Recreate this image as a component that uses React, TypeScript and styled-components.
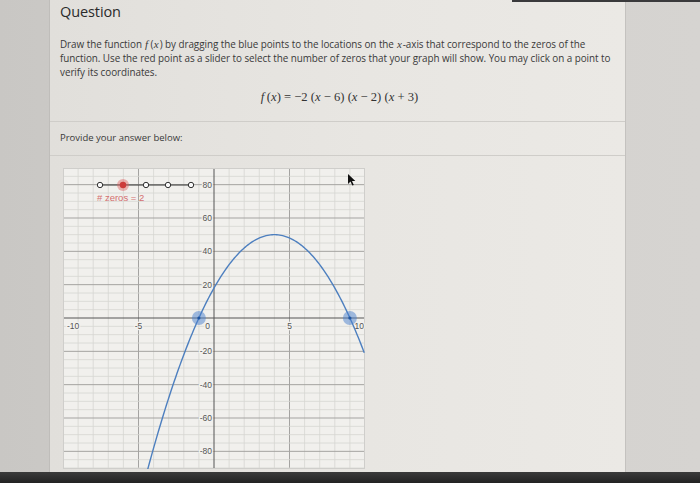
import React from 'react';
import styled, { createGlobalStyle } from 'styled-components';

const GlobalStyle = createGlobalStyle`
  html, body {
    margin: 0;
    padding: 0;
    height: 483px;
    overflow: hidden;
    background: #cfcdca;
  }
  #root {
    height: 483px;
  }
`;

const Screen = styled.div`
  position: relative;
  height: 483px;
  display: flex;
  flex-direction: column;
  background: linear-gradient(90deg, #c9c7c4 0%, #d3d1ce 60%, #d6d4d1 100%);
`;

const Bezel = styled.div`
  position: absolute;
  top: 0;
  left: 512px;
  right: 0;
  height: 2px;
  background: #3a3a3c;
`;

const Main = styled.div`
  flex: 1;
  display: flex;
  overflow: hidden;
`;

const Gutter = styled.div<{ $w?: number }>`
  width: ${p => (p.$w ? `${p.$w}px` : 'auto')};
  flex: ${p => (p.$w ? '0 0 auto' : '1')};
`;

const Card = styled.div`
  width: 575px;
  background: linear-gradient(90deg, #e1dfdb 0%, #e8e6e2 55%, #ebe9e5 100%);
  border-left: 1px solid #bfbdba;
  border-right: 1px solid #c4c2bf;
  display: flex;
  flex-direction: column;
  font-family: 'Open Sans', 'Liberation Sans', sans-serif;
  color: #3b3b3b;
`;

const Section = styled.div<{ $pad: string }>`
  padding: ${p => p.$pad};
  border-bottom: 1px solid #cfcdc9;
`;

const Heading = styled.h2`
  margin: 0;
  font-size: 14.5px;
  font-weight: 400;
  line-height: 20px;
  color: #2a2a2a;
  letter-spacing: -0.1px;
`;

const Prompt = styled.p`
  margin: 15px 0 0;
  font-size: 9.9px;
  line-height: 14px;
  letter-spacing: -0.05px;
  color: #3a3a3a;
`;

const MathVar = styled.span<{ $gap?: boolean }>`
  display: inline-block;
  line-height: 12px;
  font-family: 'Liberation Serif', 'DejaVu Serif', serif;
  font-style: italic;
  font-size: 11px;
  padding: 0 ${p => (p.$gap ? '2.5px' : '1px')} 0 0.5px;
`;

const Formula = styled.div`
  margin: 11px 0 0;
  text-align: center;
  padding-left: 4px;
  font-family: 'Liberation Serif', 'DejaVu Serif', serif;
  font-size: 12.6px;
  line-height: 14px;
  color: #333;
`;

const Label = styled.div`
  font-size: 9.5px;
  line-height: 12px;
  color: #3a3a3a;
`;

const GraphArea = styled.div`
  padding: 12px 0 0 13px;
`;

const BottomBar = styled.div`
  height: 11px;
  background: linear-gradient(180deg, #3b3b3b 0%, #222 100%);
`;

const W = 302;
const H = 301;
const OX = 151;
const OY = 150;
const SX = 15.1;
const SY = 150 / 90;
const px = (u: number) => OX + u * SX;
const py = (v: number) => OY - v * SY;
const f = (x: number) => -2 * (x + 1) * (x - 9);

const Graph: React.FC = () => {
  const vLines = [];
  for (let i = -10; i <= 10; i++) {
    if (i === 0) continue;
    vLines.push(
      <line key={`v${i}`} x1={px(i)} x2={px(i)} y1={0} y2={H}
        stroke={i % 5 === 0 ? '#a4a3a1' : '#d6d5d2'} strokeWidth={i % 5 === 0 ? 1 : 0.8} />
    );
  }
  const hLines = [];
  for (let j = -90; j <= 90; j += 5) {
    if (j === 0) continue;
    hLines.push(
      <line key={`h${j}`} x1={0} x2={W} y1={py(j)} y2={py(j)}
        stroke={j % 20 === 0 ? '#a4a3a1' : '#d6d5d2'} strokeWidth={j % 20 === 0 ? 1 : 0.8} />
    );
  }

  const pts: string[] = [];
  for (let x = -4.45; x <= 10.01; x += 0.1) {
    pts.push(`${px(x).toFixed(2)},${py(f(x)).toFixed(2)}`);
  }

  const labelStyle = {
    fontFamily: "'Liberation Sans', Arial, sans-serif",
    fontSize: 8.5,
    fill: '#555',
    stroke: '#f3f2ef',
    strokeWidth: 2.5,
    paintOrder: 'stroke' as const,
  };

  const sliderX = [37, 60, 83, 105, 128];

  return (
    <svg width={W} height={H} viewBox={`0 0 ${W} ${H}`} style={{ display: 'block' }}>
      <rect x={0} y={0} width={W} height={H} fill="#f1f0ed" />
      {vLines}
      {hLines}
      <line x1={0} x2={W} y1={OY} y2={OY} stroke="#555" strokeWidth={1} />
      <line x1={OX} x2={OX} y1={0} y2={H} stroke="#555" strokeWidth={1} />
      <rect x={0.5} y={0.5} width={W - 1} height={H - 1} fill="none" stroke="#cfcecb" />

      {[20, 40, 60, 80, -20, -40, -60, -80].map(v => (
        <text key={`yl${v}`} x={OX - 2} y={py(v) + 3} textAnchor="end" style={labelStyle}>
          {v}
        </text>
      ))}
      <text x={4} y={OY + 11} style={labelStyle}>-10</text>
      <text x={px(-5)} y={OY + 11} textAnchor="middle" style={labelStyle}>-5</text>
      <text x={OX - 4} y={OY + 11} textAnchor="end" style={labelStyle}>0</text>
      <text x={px(5)} y={OY + 11} textAnchor="middle" style={labelStyle}>5</text>
      <text x={W - 1} y={OY + 11} textAnchor="end" style={labelStyle}>10</text>

      <polyline points={pts.join(' ')} fill="none" stroke="#4d7fbf" strokeWidth={1.4} />

      {[-1, 9].map(z => (
        <g key={`z${z}`}>
          <circle cx={px(z)} cy={OY} r={7} fill="rgba(74,128,205,0.5)" />
          <circle cx={px(z)} cy={OY} r={1.6} fill="#1f56a3" />
        </g>
      ))}

      <line x1={sliderX[0]} x2={sliderX[4]} y1={17} y2={17} stroke="#3a3a3a" strokeWidth={1} />
      {sliderX.map((sx, i) =>
        i === 1 ? (
          <g key={`s${i}`}>
            <circle cx={sx} cy={17} r={6} fill="rgba(222,96,96,0.45)" />
            <circle cx={sx} cy={17} r={3.2} fill="#cc3a3a" />
          </g>
        ) : (
          <circle key={`s${i}`} cx={sx} cy={17} r={2.7} fill="#fafafa" stroke="#333" strokeWidth={1} />
        )
      )}
      <text x={34} y={33} style={{ fontFamily: "'Liberation Sans', Arial, sans-serif", fontSize: 9.5, fill: '#d46f6f' }}>
        # zeros = 2
      </text>

      <path d="M285 6 L285 16 L287.5 13.6 L289.3 17.6 L290.8 16.9 L289 13 L292.3 13 Z" fill="#111" />
    </svg>
  );
};

export default function App() {
  return (
    <>
      <GlobalStyle />
      <Screen>
        <Bezel />
        <Main>
          <Gutter $w={49} />
          <Card>
            <Section $pad="2px 10px 17px">
              <Heading>Question</Heading>
              <Prompt>
                Draw the function <MathVar $gap>f</MathVar>(<MathVar>x</MathVar>) by dragging the blue points to the
                locations on the <MathVar>x</MathVar>-axis that correspond to the zeros of the function. Use the red
                point as a slider to select the number of zeros that your graph will show. You may click on a point
                to verify its coordinates.
              </Prompt>
              <Formula>
                <i>f</i>&thinsp;(<i>x</i>) = −2 (<i>x</i> − 6) (<i>x</i> − 2) (<i>x</i> + 3)
              </Formula>
            </Section>
            <Section $pad="10px 10px 11px">
              <Label>Provide your answer below:</Label>
            </Section>
            <GraphArea>
              <Graph />
            </GraphArea>
          </Card>
          <Gutter />
        </Main>
        <BottomBar />
      </Screen>
    </>
  );
}
